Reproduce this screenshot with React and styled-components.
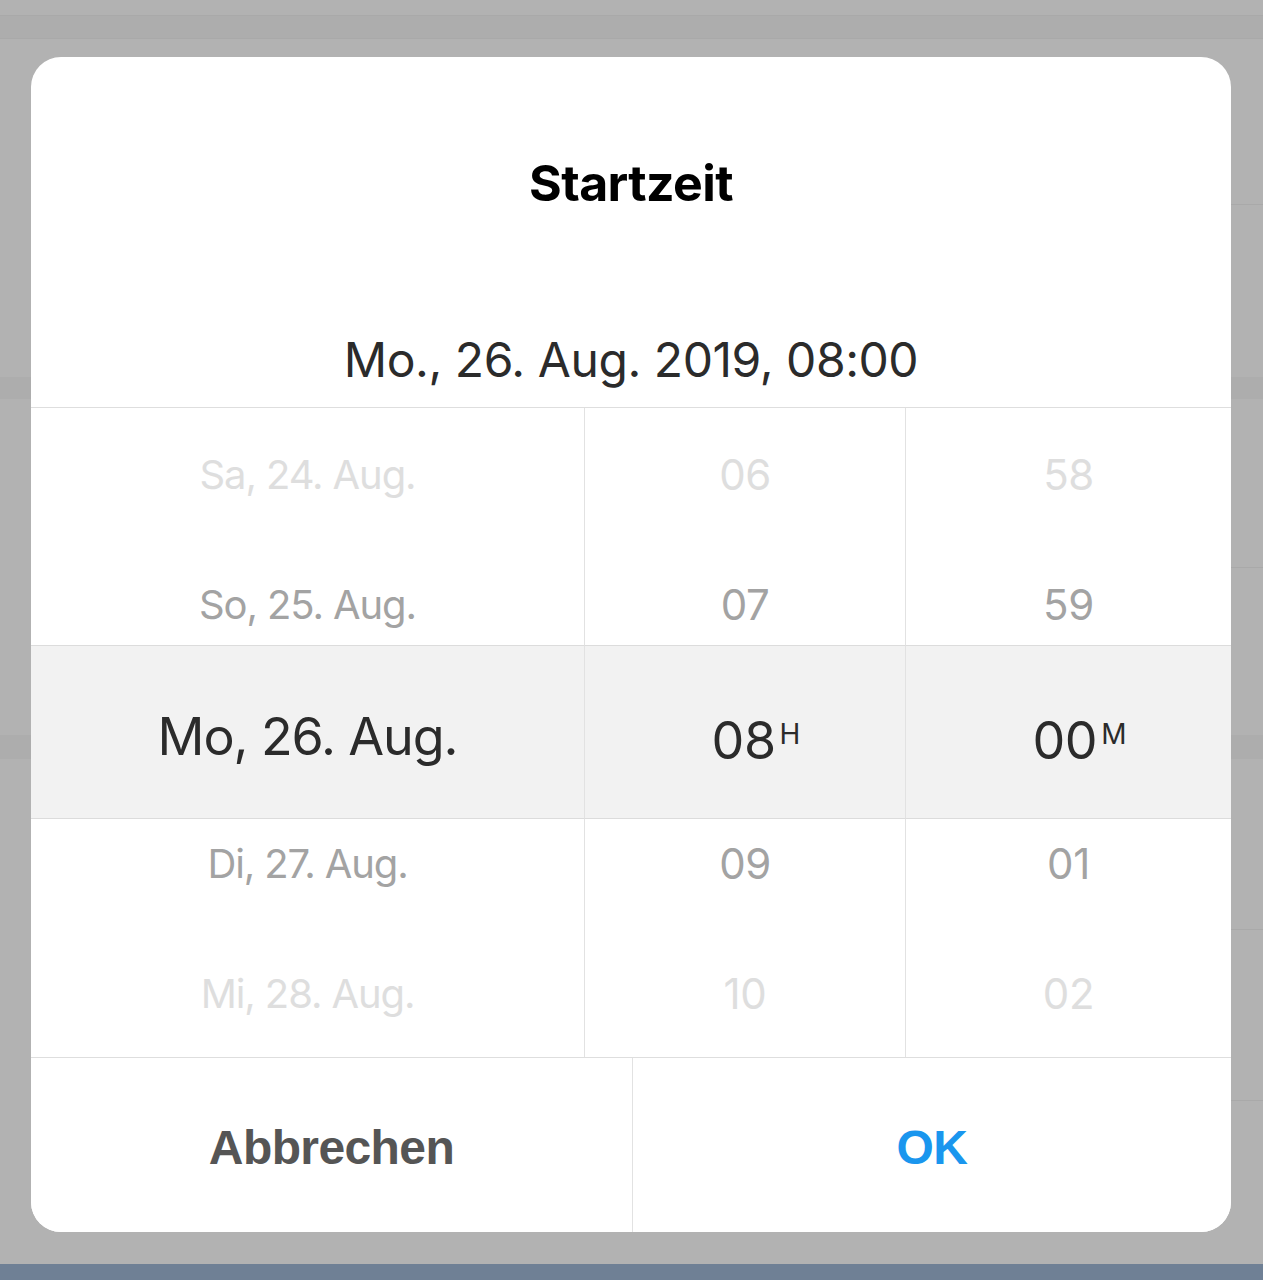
import styled, { createGlobalStyle } from 'styled-components';

const GlobalStyle = createGlobalStyle`
  html, body {
    margin: 0;
    padding: 0;
  }
  body {
    font-family: 'Inter', 'Noto Sans', sans-serif;
    background: #b2b2b2;
  }
`;

// Backdrop: the dimmed app behind the sheet, drawn as stripes
const Backdrop = styled.div`
  width: 1263px;
  height: 1280px;
  box-sizing: border-box;
  padding: 57px 32px 0 31px;
  background-color: #b2b2b2;
  background-repeat: no-repeat;
  background-image:
    linear-gradient(#6f8095, #6f8095),
    linear-gradient(#a9a9a9, #a9a9a9),
    linear-gradient(#a9a9a9, #a9a9a9),
    linear-gradient(#adadad, #adadad),
    linear-gradient(#adadad, #adadad),
    linear-gradient(#a9a9a9, #a9a9a9),
    linear-gradient(#a9a9a9, #a9a9a9),
    linear-gradient(#a9a9a9, #a9a9a9),
    linear-gradient(#a9a9a9, #a9a9a9),
    linear-gradient(#adadad, #adadad);
  background-size:
    100% 16px,
    100% 1px,
    100% 1px,
    100% 22px,
    100% 24px,
    40px 1px,
    40px 1px,
    40px 1px,
    40px 1px,
    100% 23px;
  background-position:
    0 1264px,
    0 15px,
    0 38px,
    0 377px,
    0 735px,
    right 0 top 204px,
    right 0 top 567px,
    right 0 top 929px,
    right 0 top 1100px,
    0 15px;
`;

const Sheet = styled.div`
  width: 1200px;
  height: 1175px;
  background: #fff;
  border-radius: 30px;
  overflow: hidden;
  display: flex;
  flex-direction: column;
`;

const Header = styled.div`
  height: 350px;
  display: flex;
  flex-direction: column;
  align-items: center;
`;

const Title = styled.h2`
  margin: 96px 0 0;
  font-size: 50px;
  line-height: 60px;
  font-weight: 700;
  letter-spacing: -0.6px;
  color: #000;
`;

const Summary = styled.div`
  margin-top: 117px;
  font-size: 48px;
  line-height: 60px;
  letter-spacing: -0.45px;
  color: #2b2b2b;
`;

const Picker = styled.div`
  display: grid;
  grid-template-columns: 554px 321px 1fr;
  grid-template-rows: 237px 174px 1fr;
  height: 650px;
  border-top: 1px solid #dedede;
  box-sizing: border-box;
`;

const Cell = styled.div`
  display: flex;
  flex-direction: column;
  align-items: center;
  border-right: ${p => (p.$last ? 'none' : '1px solid #e2e2e2')};
  box-sizing: border-box;
  ${p => p.$pos === 'top' && `
    justify-content: flex-end;
    gap: 70px;
    padding-bottom: 10px;
  `}
  ${p => p.$pos === 'bottom' && `
    justify-content: flex-start;
    gap: 70px;
    padding-top: 15px;
  `}
  ${p => p.$pos === 'mid' && `
    justify-content: center;
    padding-top: 10px;
    background: #f2f2f2;
    border-top: 1px solid #dcdcdc;
    border-bottom: 1px solid #dcdcdc;
  `}
`;

const Item = styled.div`
  font-size: ${p => (p.$text ? '40px' : '42px')};
  line-height: 60px;
  letter-spacing: ${p => (p.$text ? '-1.1px' : '-0.4px')};
  color: ${p => (p.$faint ? '#dedede' : '#a3a3a3')};
  white-space: nowrap;
`;

const Selected = styled.div`
  font-size: 52px;
  line-height: 60px;
  letter-spacing: ${p => (p.$unit ? '-0.5px' : '-1.1px')};
  color: #2b2b2b;
  white-space: nowrap;
  padding-left: ${p => (p.$unit ? '22px' : '0')};
`;

const Unit = styled.span`
  font-size: 28px;
  vertical-align: 15px;
  margin-left: 4px;
  letter-spacing: 0;
`;

const Actions = styled.div`
  flex: 1;
  display: grid;
  grid-template-columns: 601px 1fr;
  border-top: 1px solid #dedede;
`;

const ActionButton = styled.button`
  border: none;
  background: #fff;
  border-left: ${p => (p.$primary ? '1px solid #e2e2e2' : 'none')};
  font-family: 'Liberation Sans', Arial, sans-serif;
  font-size: 48px;
  font-weight: 700;
  letter-spacing: -0.6px;
  color: ${p => (p.$primary ? '#1a96ee' : '#555555')};
  padding: 4px 0 0;
  cursor: pointer;
`;

const COLUMNS = [
  {
    text: true,
    above: ['Sa, 24. Aug.', 'So, 25. Aug.'],
    value: 'Mo, 26. Aug.',
    below: ['Di, 27. Aug.', 'Mi, 28. Aug.'],
  },
  { above: ['06', '07'], value: '08', unit: 'H', below: ['09', '10'] },
  { above: ['58', '59'], value: '00', unit: 'M', below: ['01', '02'] },
];

export default function App() {
  return (
    <>
      <GlobalStyle />
      <Backdrop>
        <Sheet>
          <Header>
            <Title>Startzeit</Title>
            <Summary>Mo., 26. Aug. 2019, 08:00</Summary>
          </Header>

          <Picker>
            {COLUMNS.map((col, i) => (
              <Cell key={'t' + i} $pos="top" $last={i === 2}>
                <Item $faint $text={col.text}>{col.above[0]}</Item>
                <Item $text={col.text}>{col.above[1]}</Item>
              </Cell>
            ))}
            {COLUMNS.map((col, i) => (
              <Cell key={'m' + i} $pos="mid" $last={i === 2}>
                <Selected $unit={!!col.unit}>
                  {col.value}
                  {col.unit && <Unit>{col.unit}</Unit>}
                </Selected>
              </Cell>
            ))}
            {COLUMNS.map((col, i) => (
              <Cell key={'b' + i} $pos="bottom" $last={i === 2}>
                <Item $text={col.text}>{col.below[0]}</Item>
                <Item $faint $text={col.text}>{col.below[1]}</Item>
              </Cell>
            ))}
          </Picker>

          <Actions>
            <ActionButton>Abbrechen</ActionButton>
            <ActionButton $primary>OK</ActionButton>
          </Actions>
        </Sheet>
      </Backdrop>
    </>
  );
}
